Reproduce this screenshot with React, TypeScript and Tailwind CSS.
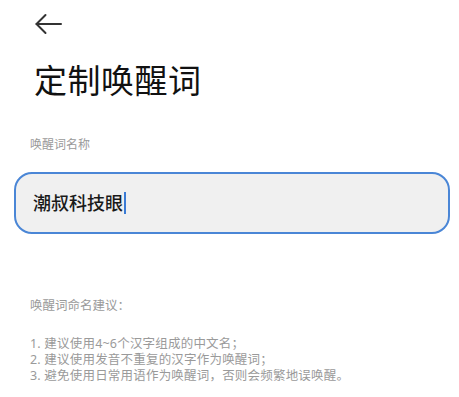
const font = { fontFamily: '"Noto Sans", "Noto Sans CJK SC", sans-serif' };

const tips = [
  '1. 建议使用4~6个汉字组成的中文名；',
  '2. 建议使用发音不重复的汉字作为唤醒词；',
  '3. 避免使用日常用语作为唤醒词，否则会频繁地误唤醒。',
];

export default function App() {
  return (
    <div className="w-[459px] h-[397px] bg-white overflow-hidden" style={font}>
      <div className="pl-[35px] pt-[13px]">
        <button type="button" aria-label="返回" className="block">
          <svg width="28" height="22" viewBox="0 0 28 22" fill="none" stroke="#333" strokeWidth="2" strokeLinecap="round" strokeLinejoin="round">
            <path d="M1.5 11H26" />
            <path d="M10.5 2L1.5 11L10.5 20" />
          </svg>
        </button>
      </div>

      <h1 className="pl-[34px] mt-[26px] text-[33px] leading-[40px] text-[#111] font-normal tracking-[0.5px]">定制唤醒词</h1>

      <div className="pl-[30px] mt-[36px] text-[12px] leading-[16px] text-[#9a9a9a]">唤醒词名称</div>

      <div className="ml-[14px] mr-[9px] mt-[19px] h-[62px] rounded-[18px] border-2 border-[#4a86d6] bg-[#f0f0f0] flex items-center pl-[17px] pr-4">
        <span className="text-[18px] leading-[24px] text-[#1a1a1a] font-medium">潮叔科技眼</span>
        <span className="ml-[1px] w-[2px] h-[22px] bg-[#3a7bd5]" />
      </div>

      <div className="pl-[30px] mt-[64px] text-[12.5px] leading-[16px] text-[#9a9a9a]">唤醒词命名建议：</div>

      <ul className="pl-[30px] mt-[22px] text-[12.5px] leading-[16px] text-[#9a9a9a] tracking-[0.2px]">
        {tips.map((t) => (
          <li key={t}>{t}</li>
        ))}
      </ul>
    </div>
  );
}
